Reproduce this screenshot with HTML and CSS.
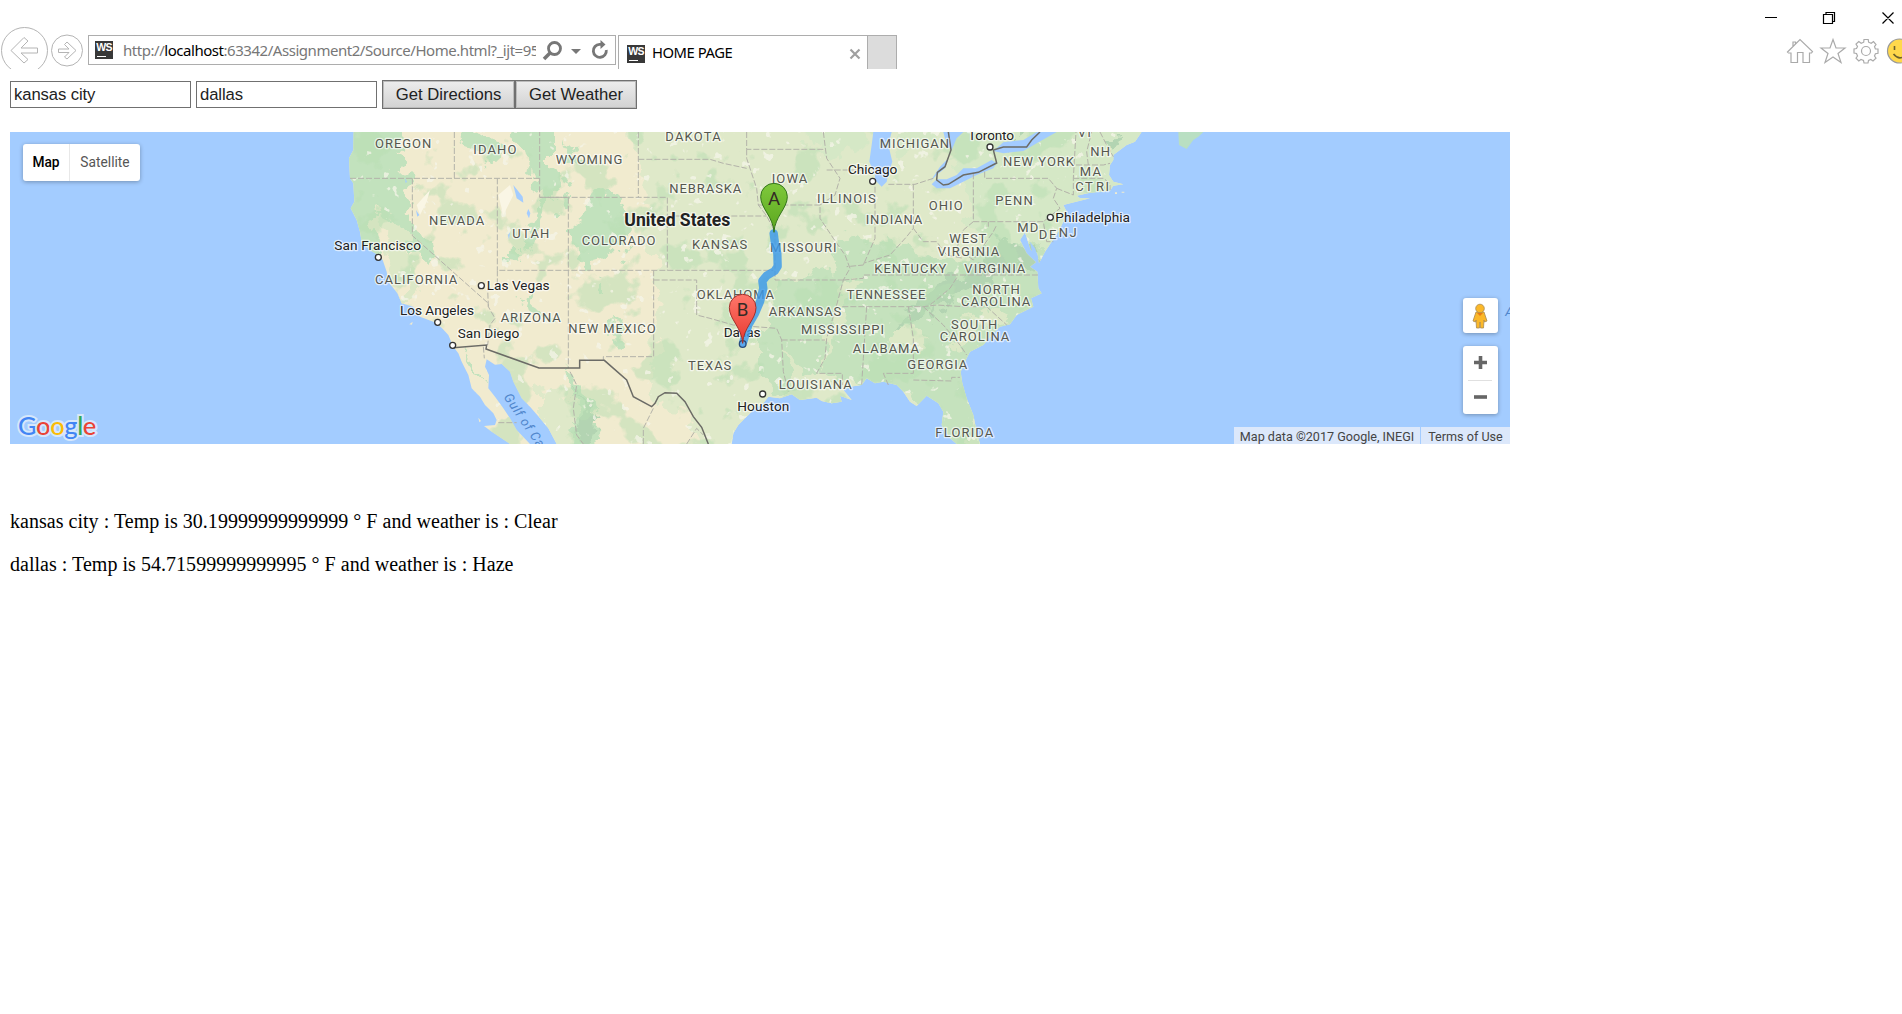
FILE: index.html
```html
<!DOCTYPE html>
<html lang="en">
<head>
<meta charset="utf-8">
<title>HOME PAGE</title>
<link rel="stylesheet" href="styles.css">
</head>
<body>
<header class="browser">
  <div class="nav">
    <svg class="arrows" width="88" height="69" viewBox="0 0 88 69" fill="none" stroke="#b4b4b4">
      <circle cx="24.500" cy="50.500" r="23"/><circle cx="67" cy="50.500" r="15.500"/>
      <path d="M11 50.500 24 37.500 28 41 21 48H37.500V53H21L28 59.500 24 63Z"/>
      <path d="M76 50.500 67 42 64.500 44.500 69 49H58.500V52.500H69L64.500 57 67 59Z"/>
    </svg>
    <div class="address">
      <span class="ws">WS</span>
      <span class="url">http://<b>localhost</b>:63342/Assignment2/Source/Home.html?_ijt=95</span>
      <svg class="tools" width="78" height="28" viewBox="537 36 78 28" fill="none" stroke="#777">
        <circle cx="554.500" cy="48.500" r="6" stroke-width="2.800"/><path d="M550 53 544 59" stroke-width="3.600"/>
        <path d="M571 49h10l-5 5z" fill="#777" stroke="none"/>
        <path d="M602 44.300H599.500A6.500 6.500 0 1 0 606.300 50" stroke-width="2.800"/><path d="M600.500 40v9l5-4.500z" fill="#777" stroke="none"/>
      </svg>
    </div>
    <div class="tab">
      <span class="ws">WS</span><span class="tab-title">HOME PAGE</span>
      <svg width="12" height="12" viewBox="0 0 12 12" stroke="#a0a0a0" stroke-width="2.200"><path d="M1.500 1.500 10.500 10.500M10.500 1.500 1.500 10.500"/></svg>
    </div>
    <div class="new-tab"></div>
  </div>
  <svg class="window" width="162" height="69" viewBox="1740 0 162 69" fill="none" stroke="#aaa" stroke-width="1.200">
    <g stroke="#000"><path d="M1765 17.500h12M1823.500 14.500h9v9h-9zM1826 14v-1.500h8.500v9H1833M1882.500 12.500l11 11M1893.500 12.500l-11 11"/></g>
    <path d="M1787.500 52 1800 39.500 1812.500 51.500 1811.500 53H1809.500V62.500H1803V52.500H1797.500V62.500H1791V53H1788.500ZM1793 46.500V42H1795.500V44"/>
    <path d="M1833 39.500 1836 48H1845L1838 53.500 1841 62.500 1833 57 1825 62.500 1828 53.500 1821 48H1830Z"/>
    <path d="M1863.700 42.200 1864 39.500H1868.200L1868.600 42.200 1871.200 43.300 1873.500 41.500 1876 44.500 1874.500 46.700 1875.400 49H1878V53.300L1875.400 53.700 1874.500 56 1876 58.200 1873 61 1870.800 59.500 1868.500 60.500 1868 63H1864L1863.500 60.500 1861 59.500 1858.800 61 1856 58.200 1857.500 56 1856.500 53.500 1854 53V49L1856.500 48.500 1857.500 46.500 1856 44 1858.800 41.500 1861.200 43.200Z"/>
    <circle cx="1866" cy="51" r="4.500"/>
    <circle cx="1899.500" cy="51" r="12" fill="#ffd84b" stroke="#999"/><path d="M1894.500 46v4M1893.500 54q4 5 8.500 3.500" stroke="#6c602c" stroke-width="1.600"/>
  </svg>
</header>

<main class="page">
  <form class="controls">
    <input class="field" value="kansas city" aria-label="Origin">
    <input class="field" value="dallas" aria-label="Destination">
    <button class="btn directions" type="button">Get Directions</button><button class="btn weather" type="button">Get Weather</button>
  </form>

  <section class="map">
    <svg class="canvas" width="1500" height="312" viewBox="-900 21 4500 936">
      <defs>
        <filter id="dapple" x="0" y="0" width="100%" height="100%" color-interpolation-filters="sRGB">
          <feTurbulence type="fractalNoise" baseFrequency=".009" numOctaves="4" seed="8"/>
          <feColorMatrix values="0 0 0 0 .72  0 0 0 0 .87  0 0 0 0 .7  16 0 0 0 -9.2"/>
        </filter>
        <filter id="speck" x="0" y="0" width="100%" height="100%" color-interpolation-filters="sRGB">
          <feTurbulence type="fractalNoise" baseFrequency=".028" numOctaves="3" seed="21"/>
          <feColorMatrix values="0 0 0 0 .96  0 0 0 0 .96  0 0 0 0 .91  0 18 0 0 -12.6"/>
        </filter>
        <filter id="ragged" filterUnits="userSpaceOnUse" x="50" y="-60" width="2550" height="1100" color-interpolation-filters="sRGB">
          <feTurbulence type="fractalNoise" baseFrequency=".016" numOctaves="4" seed="5"/>
          <feDisplacementMap in="SourceGraphic" scale="110" xChannelSelector="R" yChannelSelector="G"/>
        </filter>
        <clipPath id="land">
          <path d="M131 21 130 75 117 100 120 160 130 175 133 230 122 250 140 285 150 320 155 350 180 375 200 388 218 405 230 440 235 470 262 505 275 535 310 545 330 575 370 590 395 608 415 630 430 665 445 685 455 710 475 750 485 790 510 815 525 840 550 865 560 885 555 900 522 903 545 920 572 938 600 957H660L620 915 600 880 580 850 555 815 535 790 537 750 525 725 530 703 555 719 575 717 600 740 610 770 635 820 660 845 690 880 715 910 740 957H1265L1270 925 1285 900 1305 880 1330 855 1360 835 1375 815 1410 820 1445 808 1470 825 1520 818 1535 828 1565 835 1595 830 1590 812 1625 825 1600 795 1620 785 1655 780 1670 760 1695 775 1720 770 1760 780 1780 800 1800 830 1820 843 1850 812 1885 835 1900 860 1895 900 1920 940 1940 957H2010L2000 920 1990 870 1970 820 1957 775 1952 740 1970 700 1980 680 2020 660 2050 625 2070 605 2100 598 2120 570 2170 545 2163 520 2195 505 2185 490 2182 440 2160 425 2178 412 2150 385 2130 345 2145 322 2162 375 2182 385 2187 415 2205 380 2225 350 2245 320 2260 290 2270 260 2260 240 2280 235 2340 220 2310 220 2300 212 2340 203 2400 197 2410 182 2440 178 2410 170 2397 150 2400 120 2410 105 2410 90 2450 60 2475 50 2495 21Z"/>
        </clipPath>
      </defs>
      <g clip-path="url(#land)">
        <path class="sand" d="M100 0H2550V980H100Z"/>
        <g filter="url(#ragged)">
          <path class="pale" d="M970 -50H2580V1030H1180L1150 880 1110 840 1040 830 1030 750 1050 690 1040 570 1020 420 1000 320 1010 220 980 130ZM690 1000 690 800 740 780 800 850 870 1000Z"/>
          <path class="mid" d="M1900 80 2000 0 2580 -50V400L2100 420 1980 300 1980 180ZM1480 -50H1660V60L1600 90 1500 60ZM1760 -40H1880V60L1770 90Z"/>
          <path class="green" d="M50 -50H260L280 65 245 75 265 130 305 150 290 210 320 310 370 380 350 435 305 390 255 300 205 240 180 300 215 370 180 400 50 300ZM442 60 500 0 590 70 560 105 500 80ZM600 -40H720V130L760 200 755 240 710 250 690 300 650 380 645 320 685 230 670 140 640 90ZM800 370 800 290 830 270 860 210 890 180 920 240 960 250 955 350 900 410 830 430ZM640 520 680 530 730 610 690 590ZM770 740 820 790 850 870 880 1000H780L800 860ZM460 665 490 700 515 780 485 730ZM600 375 635 375 625 415 600 410ZM850 470 870 470 880 510 860 500ZM910 590 935 600 930 660 910 650ZM760 55 800 70 830 110 790 90Z"/>
          <path class="forest" d="M1570 350 1650 320 1690 340 1780 355 1840 400 1950 390 2060 360 2140 345 2230 390V560L2050 680 1960 1000H1890L1850 830 1700 785 1500 750 1400 810 1350 760 1350 620 1400 570 1390 480 1470 450 1600 430Z"/>
          <path class="pale2" d="M1410 680 1440 690 1530 820 1490 840ZM1580 560 1615 470 1635 500 1560 690 1530 740ZM1960 590 2070 540 2100 570 2010 620 1920 690ZM205 250 245 270 300 350 320 490 300 530 260 480 225 390ZM1750 620 1830 600 1860 640 1770 660Z"/>
          <path class="hills" d="M1760 620 1830 520 1880 480 1960 450 2060 340 2125 345 2190 390 2150 430 2000 470 1880 555ZM790 770 830 850 870 880 850 945 800 940 820 860ZM2090 -20 2130 30 2110 60ZM2370 30 2410 20 2400 60Z"/>
        </g>
        <rect x="100" y="0" width="2450" height="980" filter="url(#dapple)" opacity=".5"/>
        <rect x="100" y="0" width="2450" height="980" filter="url(#speck)" opacity=".75"/>
        <path class="salt" d="M565 210 600 180 610 210 580 270ZM320 240 360 195 350 230 330 270Z"/>
      </g>
      <g class="water">
        <path d="M1690 21 1685 60 1678 110 1695 150 1695 165 1715 185 1730 170 1735 145 1747 110 1735 60 1745 21ZM1865 178 1880 190 1920 190 1960 170 2000 150 2050 130 2060 115 2045 105 2000 130 1960 130 1940 150 1910 163 1880 163ZM2050 78 2080 85 2140 78 2180 55 2240 21H2180L2140 45 2080 52ZM1860 170 1890 125 1915 100 1905 130 1880 150ZM1900 21H1960L1940 40 1925 75 1910 60ZM610 180 638 215 640 233 620 220ZM655 252 661 265 657 280 650 265ZM600 322 597 345 594 330ZM318 255 328 270 322 275ZM285 160 291 170 287 175ZM2160 350 2175 370 2185 400 2168 390Z"/>
        <path class="green" d="M2605 21H2680L2665 35 2650 45 2630 72 2607 60Z"/>
        <path class="sand" d="M298 598 308 590 306 599ZM318 596 328 598ZM370 625 378 629ZM505 878 513 888 508 892ZM2415 202h6v5h-6zM2435 200h8v3h-8z"/>
      </g>
      <g class="state">
        <path d="M433 21V160M120 160H689V21M689 160V217H775V436M562 160V436M307 160V332L535 535V545L555 580 540 600 533 660M535 545 533 490 562 490V436H1072M775 436V730M689 217H1072V436M985 21V217M985 103H1200L1240 115 1310 130M1072 273H1370M1310 21V73H1540M1310 73 1310 100 1340 190 1345 240 1370 273 1395 320V465H1600M1072 436H1390M1031 436V695H880V706M1031 465H1160V570L1200 580 1270 600 1400 610 1415 645 1420 740 1435 800M1345 240H1530M1540 21 1550 100 1590 160 1575 210 1530 240 1530 280 1570 340 1605 390 1620 430 1600 465 1580 540 1550 640 1545 700 1520 745H1597V780M1415 645H1545M1550 135H1680M1735 178H1815L1870 160M1695 185V340L1660 420 1610 425M1810 178V310L1790 335 1740 390 1660 415M1810 310 1840 350 1880 350 1910 390 1960 400M1600 465 1660 460V450H2188M1597 545H1840L1880 540 1960 545H2030L2090 600M1670 545 1660 700 1655 780M1795 545 1810 640 1810 745H1720L1735 780M1810 765 1925 768V757H1950M1840 545 1900 600 1950 660 1970 690M1990 145V290L1960 315 1940 370 1990 405 2050 320 2060 300M1990 290H2200L2210 350H2230M2035 305V290M2024 140V160H2215L2240 190 2230 220 2250 250 2200 290M2240 190 2290 210 2290 160 2298 21M2298 120H2380L2400 115M2290 160H2380L2400 175V195M2335 120 2330 80 2345 21M2370 21 2390 60 2410 95M1940 458 1920 490 1860 540M780 740 800 780 790 850 800 930 820 957M520 665 523 700M565 893H620M1000 957 1000 910 1030 850M1130 957 1160 910 1180 930"/>
      </g>
      <g class="nation"><path d="M430 668 530 660 528 672 687 729H809V706H883L950 765 970 815 1025 845 1035 835 1045 815 1065 803 1100 805 1125 830 1150 875 1175 907 1195 957M1915 21 1923 75 1905 125 1882 142 1880 165 1900 180 1915 178 1960 150 2005 142 2060 114 2050 75 2080 66H2150L2165 45 2190 21"/></g>

      <g class="cities">
        <circle cx="205" cy="397" r="9"/><circle cx="514" cy="482" r="9"/><circle cx="383" cy="592" r="9"/><circle cx="428" cy="661" r="9"/><circle cx="1688" cy="169" r="9"/><circle cx="1358" cy="807" r="9"/><circle cx="2040" cy="66" r="9"/><circle cx="2221" cy="277" r="9"/>
      </g>
      <g class="names">
        <text x="195" y="70" textLength="169">OREGON</text><text x="490" y="88" textLength="129">IDAHO</text><text x="737" y="116" textLength="200">WYOMING</text>
        <text x="357" y="300" textLength="166">NEVADA</text><text x="607" y="338" textLength="111">UTAH</text><text x="815" y="361" textLength="221">COLORADO</text>
        <text x="195" y="478" textLength="247">CALIFORNIA</text><text x="572" y="592" textLength="180">ARIZONA</text><text x="775" y="625" textLength="262">NEW MEXICO</text>
        <text x="1066" y="47" textLength="166">DAKOTA</text><text x="1385" y="174" textLength="107">IOWA</text><text x="1078" y="205" textLength="216">NEBRASKA</text>
        <text x="1709" y="70" textLength="208">MICHIGAN</text><text x="1521" y="233" textLength="176">ILLINOIS</text><text x="1667" y="297" textLength="170">INDIANA</text><text x="1856" y="255" textLength="102">OHIO</text>
        <text x="1146" y="372" textLength="166">KANSAS</text><text x="1380" y="381" textLength="200">MISSOURI</text><text x="1693" y="443" textLength="216">KENTUCKY</text>
        <text x="1160" y="522" textLength="232">OKLAHOMA</text><text x="1610" y="522" textLength="236">TENNESSEE</text><text x="1376" y="572" textLength="218">ARKANSAS</text>
        <text x="1473" y="626" textLength="249">MISSISSIPPI</text><text x="1628" y="683" textLength="199">ALABAMA</text><text x="1134" y="736" textLength="130">TEXAS</text>
        <text x="1792" y="732" textLength="180">GEORGIA</text><text x="1406" y="792" textLength="219">LOUISIANA</text><text x="2079" y="123" textLength="213">NEW YORK</text>
        <text x="2303" y="36" textLength="46">VT</text><text x="2341" y="94" textLength="59">NH</text><text x="2309" y="153" textLength="64">MA</text><text x="2296" y="198" textLength="52">CT</text><text x="2358" y="198" textLength="39">RI</text>
        <text x="2056" y="241" textLength="112">PENN</text><text x="2122" y="321" textLength="63">MD</text><text x="2186" y="343" textLength="53">DE</text><text x="2246" y="337" textLength="54">NJ</text>
        <text x="1918" y="354" textLength="111">WEST</text><text x="1883" y="393" textLength="185">VIRGINIA</text><text x="1963" y="443" textLength="183">VIRGINIA</text>
        <text x="1987" y="507" textLength="142">NORTH</text><text x="1953" y="544" textLength="208">CAROLINA</text><text x="1923" y="611" textLength="139">SOUTH</text><text x="1889" y="649" textLength="209">CAROLINA</text><text x="1876" y="937" textLength="174">FLORIDA</text>
      </g>
      <g class="names town">
        <text x="73" y="376" textLength="260">San Francisco</text><text x="530" y="496" textLength="189">Las Vegas</text><text x="270" y="571" textLength="222">Los Angeles</text><text x="443" y="640" textLength="185">San Diego</text>
        <text x="1614" y="148" textLength="148">Chicago</text><text x="1241" y="637" textLength="111">Dallas</text><text x="1282" y="858" textLength="156">Houston</text><text x="1974" y="44" textLength="138">Toronto</text><text x="2236" y="291" textLength="224">Philadelphia</text>
        <text class="country" x="943" y="303" textLength="318">United States</text>
      </g>
      <g class="sea">
        <text transform="translate(580 816) rotate(56)">Gulf of California</text><text x="3586" y="367" dy="206">A</text>
      </g>

      <path class="route" d="M1391 325 1395 355 1402 385 1403 424 1394 438 1370 452 1357 468 1360 490 1350 530 1335 565 1315 600 1300 650"/>
      <circle cx="1298" cy="657" r="10" fill="#5ba8ee" stroke="#294d7a" stroke-width="4"/>
      <linearGradient id="go" x2="0" y2="1"><stop stop-color="#7fc93c"/><stop offset="1" stop-color="#5aa51d"/></linearGradient>
      <linearGradient id="end" x2="0" y2="1"><stop stop-color="#ff776b"/><stop offset="1" stop-color="#e7392f"/></linearGradient>
      <path d="M1392 322C1390 275 1352 250 1352 215A40 40 0 0 1 1432 215C1432 250 1394 275 1392 322Z" fill="url(#go)" stroke="#34751c" stroke-width="3"/>
      <path d="M1298 655C1296 608 1258 583 1258 548A40 40 0 0 1 1338 548C1338 583 1300 608 1298 655Z" fill="url(#end)" stroke="#a1312b" stroke-width="3"/>
      <g class="pin"><text x="1392" y="239">A</text><text x="1298" y="573">B</text></g>
    </svg>
    <div class="map-type"><span class="active">Map</span><span>Satellite</span></div>
    <div class="logo"><span class="b">G</span><span class="r">o</span><span class="y">o</span><span class="b">g</span><span class="g">l</span><span class="r">e</span></div>
    <div class="side">
      <div class="pegman"><svg width="16" height="26" viewBox="0 0 16 26"><path d="M4 9H12L15 18 12.500 19 12 17 11.500 25H8.500L8 19 7.500 25H4.500L4 17 3.500 19 1 18Z" fill="#fbb829" stroke="#a98a50" stroke-width=".8"/><circle cx="8" cy="5.500" r="4.300" fill="#fbb829" stroke="#a98a50" stroke-width=".8"/><path d="M5 10h6l-3 3z" fill="#e97b16"/></svg></div>
      <div class="zoom">
        <svg width="34" height="34" viewBox="0 0 34 34"><path d="M11 16.500H24M17.500 10V23" stroke="#666" stroke-width="3.600"/></svg>
        <i></i>
        <svg width="34" height="33" viewBox="0 0 34 33"><path d="M11 16H24" stroke="#666" stroke-width="3.600"/></svg>
      </div>
    </div>
    <div class="legal"><span>Map data ©2017 Google, INEGI</span><span>Terms of Use</span></div>
  </section>

  <section class="report">
    <p>kansas city : Temp is 30.19999999999999 ° F and weather is : Clear</p>
    <p>dallas : Temp is 54.71599999999995 ° F and weather is : Haze</p>
  </section>
</main>
</body>
</html>
```
FILE: styles.css
```css
* { box-sizing: border-box; }
body { margin: 0; background: #fff; color: #000; overflow: hidden; }
svg { display: block; flex: none; }

.browser { display: flex; justify-content: space-between; height: 69px; font-family: "Noto Sans", sans-serif; }
.nav { display: flex; }
.address { display: flex; align-items: center; width: 528px; height: 30px; margin-top: 35px; padding-left: 6px; border: 1px solid #adadad; }
.ws { flex: none; width: 18px; height: 18px; background: #383838 linear-gradient(#fff, #fff) 2px 15px / 9px 1px no-repeat; color: #fff; font: bold 10.5px/13px "Liberation Sans", sans-serif; letter-spacing: -0.8px; text-align: center; }
.url { width: 413px; margin-left: 10px; overflow: hidden; white-space: nowrap; color: #777; font-size: 15px; letter-spacing: -0.46px; line-height: 28px; }
.url b { color: #000; font-weight: normal; }
.tools { margin-left: auto; }
.tab { display: flex; align-items: center; width: 250px; height: 34px; margin: 35px 0 0 2px; padding: 2px 6px 0 8px; border: 1px solid #adadad; border-bottom: 0; }
.tab-title { margin: -3px 0 0 7px; font-size: 14.8px; letter-spacing: -0.45px; }
.tab svg { margin-left: auto; }
.new-tab { width: 29px; height: 34px; margin-top: 35px; background: #dcdcdc; border: 1px solid #adadad; border-width: 1px 1px 0 0; }

.page { padding: 11px 10px 0; }
.controls { display: flex; height: 52px; align-items: flex-start; }
.field { width: 181px; height: 27px; margin: 1px 5px 0 0; padding: 0 3px; border: 1px solid #707070; font: 16.67px "Liberation Sans", sans-serif; letter-spacing: -0.1px; color: #222; }
.btn { height: 29px; padding: 0; border: 1px solid #707070; box-shadow: inset 0 0 0 1px #bbb; background: linear-gradient(#ededed, #d2d2d2); color: #222; font: 16.67px "Liberation Sans", sans-serif; }
.directions { width: 133px; }
.weather { width: 122px; }

.map { position: relative; width: 1500px; height: 312px; overflow: hidden; background: #a3ccff; font-family: Roboto, sans-serif; }
.sand { fill: #f1ebcf; }
.pale { fill: #dfe9c9; }
.pale2 { fill: #dce8c6; }
.mid { fill: #d5e8c6; }
.green { fill: #c2e2bd; }
.forest { fill: #c5e2bd; }
.hills { fill: #b3d4b2; }
.salt { fill: #faf6e5; }
.water { fill: #a3ccff; }
.water .green { fill: #b9dfc2; }
.state { fill: none; stroke: #b3b2a9; stroke-width: 3; stroke-dasharray: 18 6; }
.nation { fill: none; stroke: #6b6b66; stroke-width: 4.5; }
.cities { fill: #fff; stroke: #333; stroke-width: 4; }
.names { font-size: 39px; fill: #55574f; stroke: rgba(255, 255, 255, .65); stroke-width: 8px; stroke-linejoin: round; paint-order: stroke; }
.town { font-size: 41px; fill: #222; }
.country { font-size: 53px; font-weight: 700; }
.sea { font-size: 39px; font-style: italic; fill: #4f86cc; letter-spacing: 2px; }
.route { fill: none; stroke: #3b98ea; stroke-opacity: .82; stroke-width: 25; stroke-linecap: round; stroke-linejoin: round; }
.pin { font-size: 56px; text-anchor: middle; fill: #332b25; }

.map-type { position: absolute; left: 13px; top: 12px; display: flex; height: 37px; border-radius: 3px; background: #fff; box-shadow: 0 1px 4px rgba(0, 0, 0, .3); font-size: 13.75px; line-height: 37px; color: #565656; }
.map-type span { width: 70px; text-align: center; }
.map-type .active { width: 47px; border-right: 1px solid #e8e8e8; color: #000; font-weight: 500; }
.logo { position: absolute; left: 8px; top: 277px; font: 500 25.5px/32px Lato, sans-serif; letter-spacing: -0.4px; -webkit-text-stroke: 4px #d6e7fb; paint-order: stroke; }
.logo .b { color: #4285f4; }
.logo .r { color: #ea4335; }
.logo .y { color: #fbbc05; }
.logo .g { color: #34a853; }
.side { position: absolute; left: 1453px; top: 166px; display: grid; gap: 13px; }
.pegman, .zoom { width: 34.5px; border-radius: 3px; background: #fff; box-shadow: 0 1px 4px rgba(0, 0, 0, .3); }
.pegman { display: grid; place-items: center; height: 35px; }
.zoom { height: 68px; }
.zoom i { display: block; width: 24px; height: 1px; margin-left: 5px; background: #e0e0e0; }
.legal { position: absolute; right: 0; bottom: 0; display: flex; gap: 1px; height: 17px; font-size: 12.6px; line-height: 19px; color: #444; white-space: nowrap; }
.legal span { width: 89px; background: #dce8fb; text-align: center; }
.legal span:first-child { width: 186px; }

.report { padding-top: 66px; font: 20px/23px "Liberation Serif", serif; letter-spacing: 0.03px; }
.report p { margin: 0 0 20px; }
```
